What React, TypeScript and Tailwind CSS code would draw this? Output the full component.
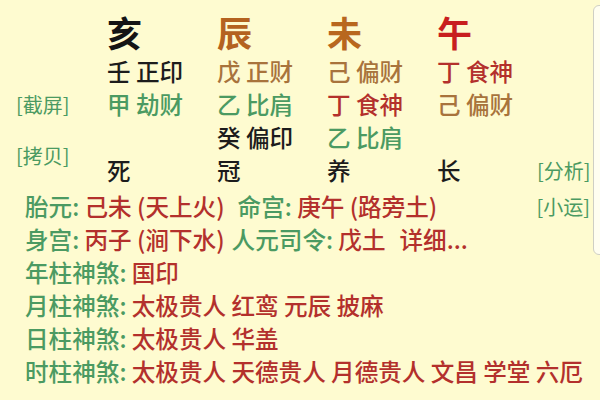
import React from 'react'

const GREEN = 'text-[#4b9a62]'
const RED = 'text-[#b3302c]'
const BROWN = 'text-[#a8733c]'
const BLACK = 'text-[#1c1c1c]'

type Cell = { gan: string; shen: string; color: string }

const pillars = [
  { zhi: '亥', zhiColor: 'text-[#141414]', rows: [
    { gan: '壬', shen: '正印', color: BLACK },
    { gan: '甲', shen: '劫财', color: GREEN },
    null,
  ], state: '死' },
  { zhi: '辰', zhiColor: 'text-[#b4621f]', rows: [
    { gan: '戊', shen: '正财', color: BROWN },
    { gan: '乙', shen: '比肩', color: GREEN },
    { gan: '癸', shen: '偏印', color: BLACK },
  ], state: '冠' },
  { zhi: '未', zhiColor: 'text-[#b8671e]', rows: [
    { gan: '己', shen: '偏财', color: BROWN },
    { gan: '丁', shen: '食神', color: RED },
    { gan: '乙', shen: '比肩', color: GREEN },
  ], state: '养' },
  { zhi: '午', zhiColor: 'text-[#c81f1f]', rows: [
    { gan: '丁', shen: '食神', color: RED },
    { gan: '己', shen: '偏财', color: BROWN },
    null,
  ], state: '长' },
]

const shensha = [
  { label: '年柱神煞', value: '国印' },
  { label: '月柱神煞', value: '太极贵人 红鸾 元辰 披麻' },
  { label: '日柱神煞', value: '太极贵人 华盖' },
  { label: '时柱神煞', value: '太极贵人 天德贵人 月德贵人 文昌 学堂 六厄' },
]

function GanCell({ cell }: { cell: Cell | null }) {
  if (!cell) return <div />
  return (
    <div className={`flex items-center whitespace-nowrap ${cell.color}`}>
      {cell.gan} {cell.shen}
    </div>
  )
}

export default function App() {
  return (
    <div
      className="relative w-[600px] h-[400px] overflow-hidden bg-[#fefbd0] text-[23.6px] leading-[33px] font-medium"
      style={{ fontFamily: '"Noto Sans CJK SC", "Noto Sans", sans-serif' }}
    >
      {/* chart grid */}
      <div className="grid grid-cols-[107px_110px_110px_110px_100px_1fr] grid-rows-[48px_33px_33px_33px_33px] pt-[7px]">
        <div />
        {pillars.map((p) => (
          <div key={p.zhi} className={`flex items-center text-[35px] font-bold ${p.zhiColor}`}>
            {p.zhi}
          </div>
        ))}
        <div />

        {[0, 1, 2].map((r) => (
          <React.Fragment key={r}>
            {r === 0 && <div />}
            {r === 1 && (
              <div className={`flex items-center pl-[16px] text-[20px] font-normal ${GREEN}`}>[截屏]</div>
            )}
            {r === 2 && (
              <div className={`row-span-2 flex items-center pl-[16px] pt-[2px] text-[20px] font-normal ${GREEN}`}>[拷贝]</div>
            )}
            {pillars.map((p, i) => (
              <GanCell key={i} cell={p.rows[r]} />
            ))}
            <div />
          </React.Fragment>
        ))}

        {pillars.map((p) => (
          <div key={p.state} className={`flex items-center ${BLACK}`}>{p.state}</div>
        ))}
        <div className={`flex items-center text-[20px] font-normal ${GREEN}`}>[分析]</div>
      </div>

      {/* details */}
      <div className="pl-[25px] pr-[10px] mt-[3px] whitespace-nowrap">
        <div className="flex items-center justify-between">
          <div>
            <span className={GREEN}>胎元: </span>
            <span className={RED}>己未 (天上火)</span>
            <span className={`ml-[13px] ${GREEN}`}>命宫: </span>
            <span className={RED}>庚午 (路旁土)</span>
          </div>
          <div className={`text-[20px] font-normal ${GREEN}`}>[小运]</div>
        </div>
        <div>
          <span className={GREEN}>身宫: </span>
          <span className={RED}>丙子 (涧下水)</span>
          <span className={`ml-[7px] ${GREEN}`}>人元司令: </span>
          <span className={RED}>戊土</span>
          <span className={`ml-[14px] ${RED}`}>详细...</span>
        </div>
        {shensha.map((s) => (
          <div key={s.label}>
            <span className={GREEN}>{s.label}: </span>
            <span className={RED}>{s.value}</span>
          </div>
        ))}
      </div>

      {/* side drawer edge */}
      <div className="absolute left-[593px] top-[5px] h-[250px] w-[20px] rounded-l-[6px] border border-[#cfcfc4] bg-[#fffef0]" />
    </div>
  )
}
